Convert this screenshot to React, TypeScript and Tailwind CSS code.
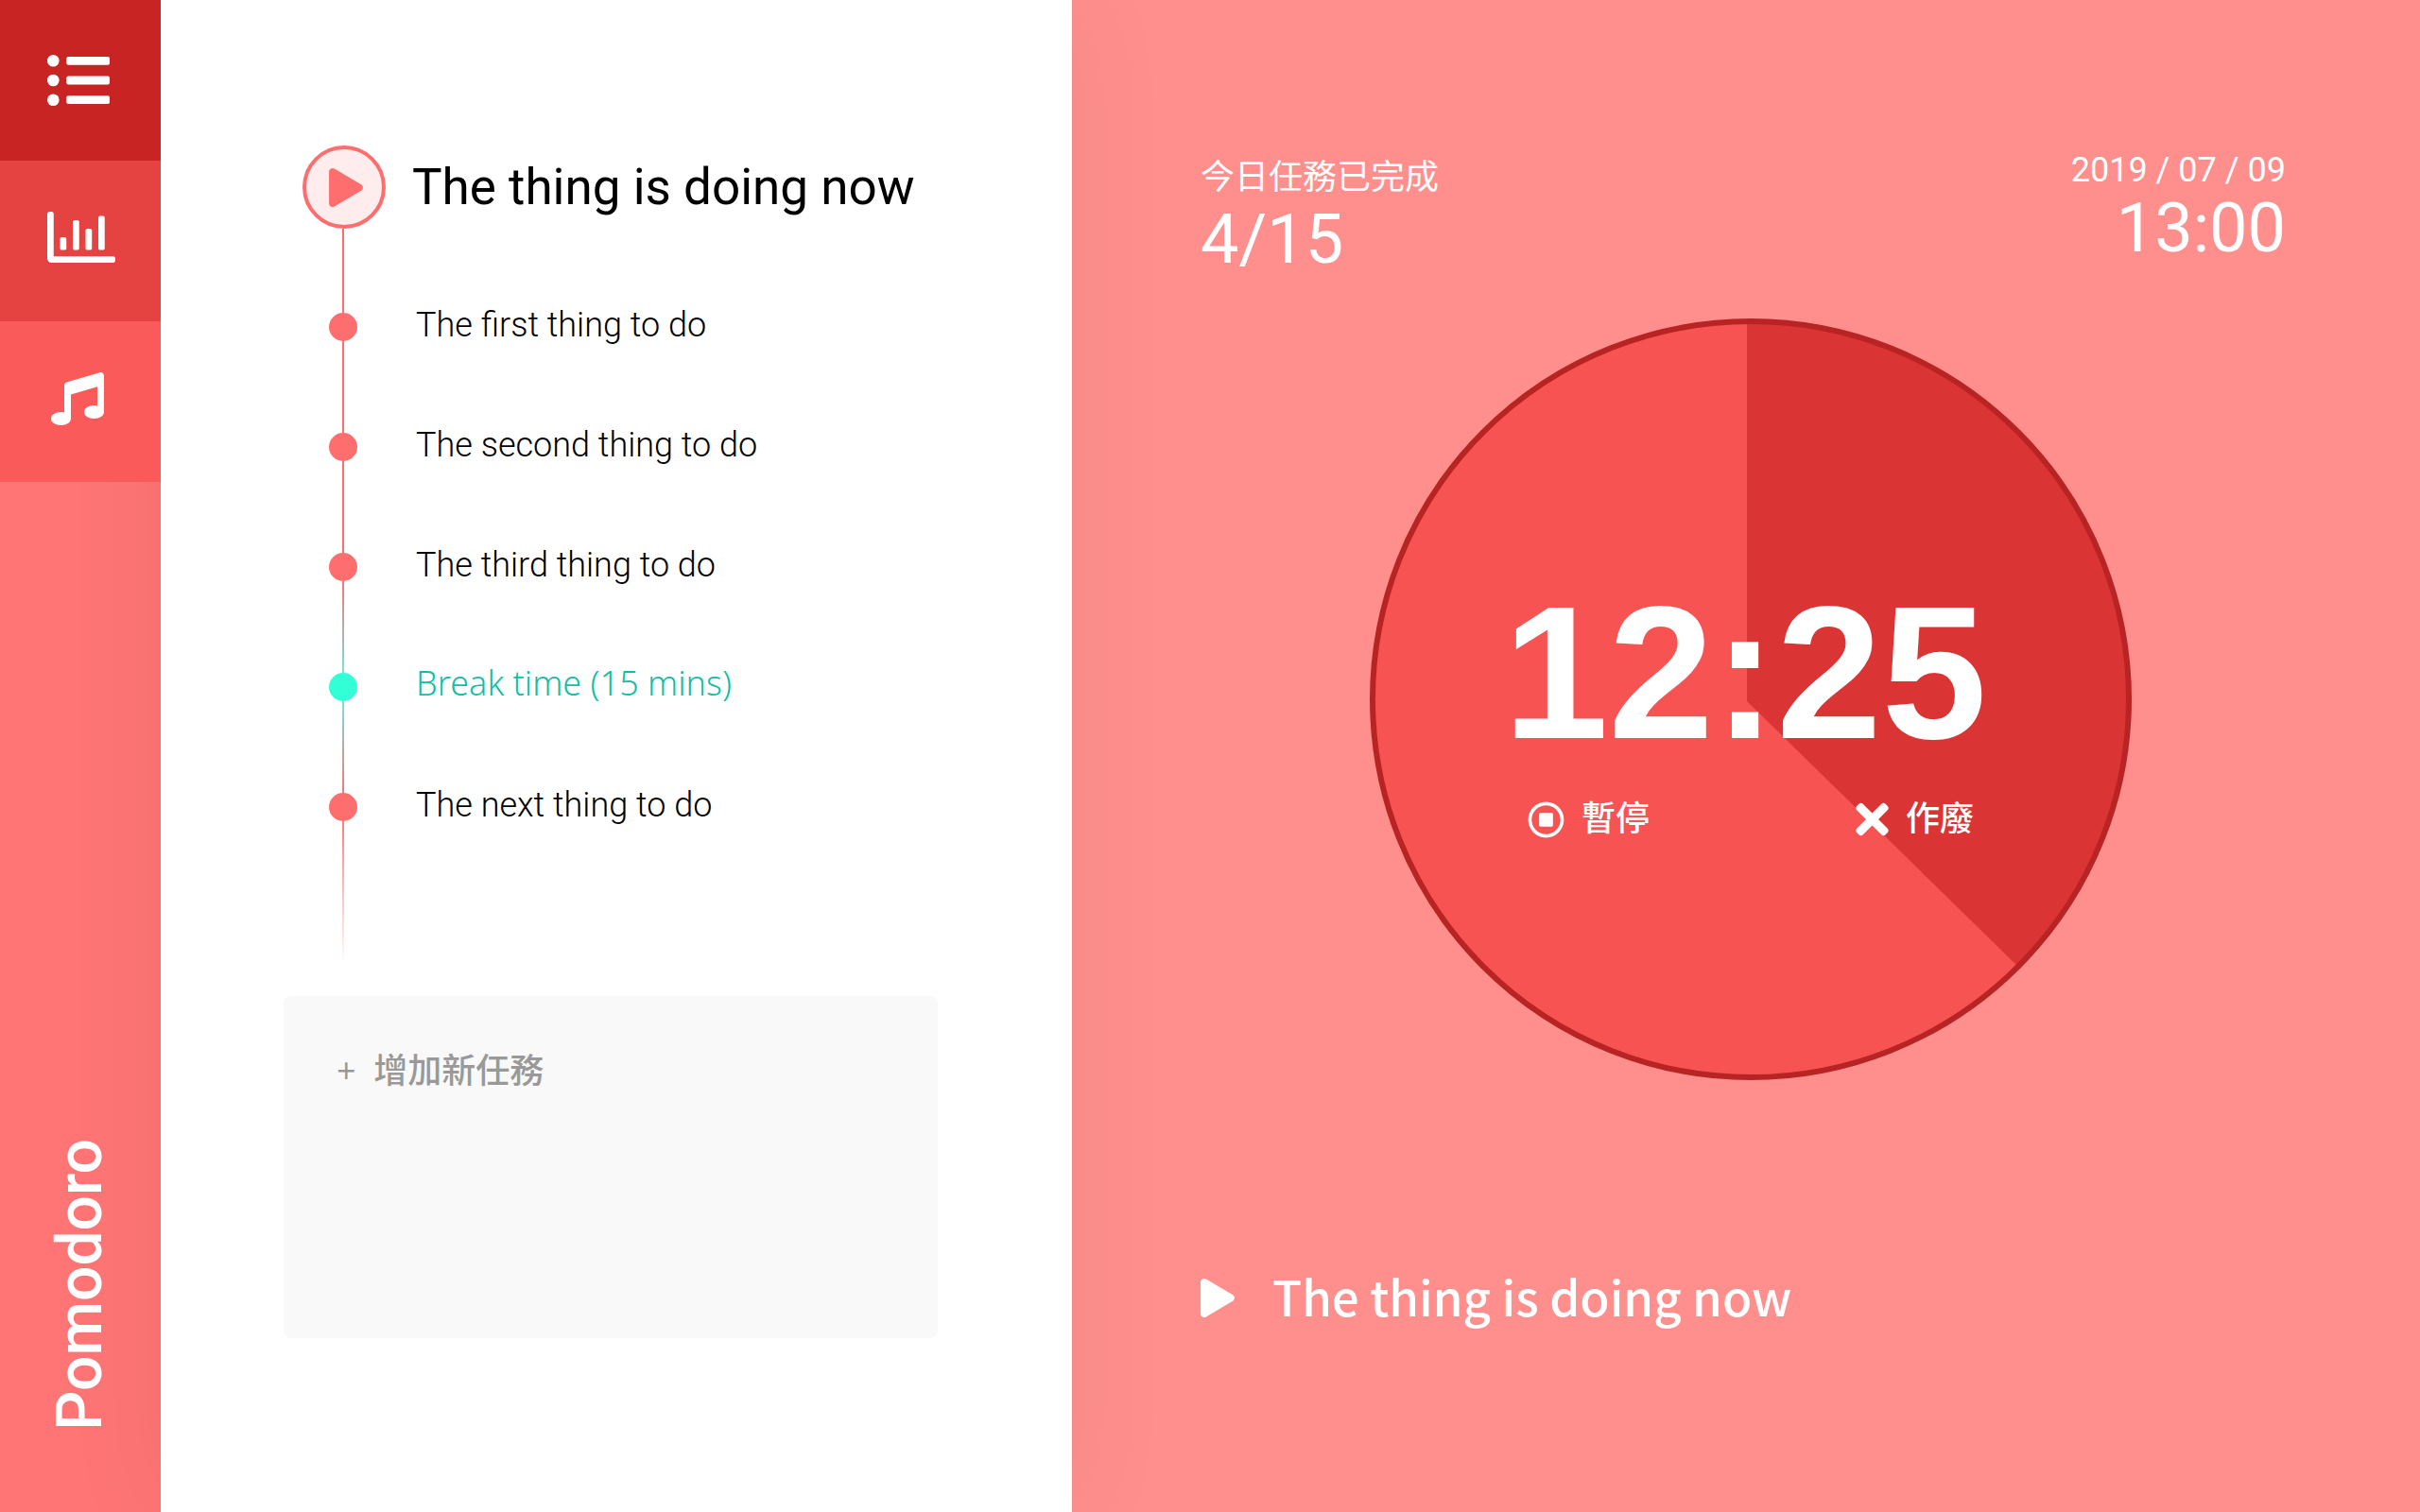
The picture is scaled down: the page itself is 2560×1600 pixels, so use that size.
import { FaMusic, FaPlay, FaRegChartBar, FaRegStopCircle, FaTimes } from "react-icons/fa";

type Task = { label: string; isBreak?: boolean };

const tasks: Task[] = [
  { label: "The first thing to do" },
  { label: "The second thing to do" },
  { label: "The third thing to do" },
  { label: "Break time (15 mins)", isBreak: true },
  { label: "The next thing to do" },
];

function ListIcon() {
  return (
    <svg viewBox="0 0 66 54" className="h-[54px] w-[66px]" fill="currentColor" aria-hidden="true">
      {[6.3, 27, 47.7].map((cy) => (
        <g key={cy}>
          <circle cx="6.3" cy={cy} r="6.3" />
          <rect x="20.3" y={cy - 4.4} width="45.7" height="8.8" rx="2" />
        </g>
      ))}
    </svg>
  );
}

function Rail() {
  return (
    <nav className="flex flex-col bg-[#ff7575] text-white">
      <button type="button" aria-label="Tasks" className="relative z-20 flex h-[170px] items-center bg-[#c92424] pl-[50px]">
        <ListIcon />
      </button>
      <button type="button" aria-label="Statistics" className="relative z-20 flex h-[170px] items-center bg-[#e54242] pb-2 pl-[50px]">
        <FaRegChartBar className="size-[72px]" />
      </button>
      <button type="button" aria-label="Music" className="relative z-20 flex h-[170px] items-center bg-[#fa5a5a] pb-1.5 pl-[54px]">
        <FaMusic className="size-[56px]" />
      </button>
      <h1 className="relative z-20 mt-auto mb-[86px] ml-[45px] rotate-180 self-start text-[66px] leading-[80px] font-medium [writing-mode:vertical-rl]">
        Pomodoro
      </h1>
    </nav>
  );
}

function TaskPanel() {
  return (
    <section className="relative z-10 flex flex-col bg-white pt-[154px] pr-[142px] pl-[130px] shadow-[0_0_110px_rgba(0,0,0,0.06)]">
      <div className="relative pb-[104px] pl-5">
        <div className="absolute top-[88px] bottom-0 left-[62px] w-[2px] bg-[linear-gradient(to_bottom,#ff6e6e_0%,#ff6e6e_47%,#66f0ec_62%,#ff6e6e_78%,rgba(255,110,110,0)_100%)]" />
        <div className="relative mb-10 flex items-center gap-7">
          <button
            type="button"
            aria-label="Play"
            className="flex size-[88px] shrink-0 items-center justify-center rounded-full border-4 border-[#ff6e6e] bg-[#ffeded] pl-1 text-[#ff6e6e]"
          >
            <FaPlay className="h-[41px] w-[36px]" />
          </button>
          <h2 className="text-[53px] leading-[88px] whitespace-nowrap text-black">The thing is doing now</h2>
        </div>
        <ol className="relative">
          {tasks.map((task) => (
            <li key={task.label} className="flex h-[127px] items-center gap-[34px]">
              <span className="flex w-[86px] justify-center">
                <span className={task.isBreak ? "size-[30px] rounded-full bg-[#33ffd6]" : "size-[30px] rounded-full bg-[#ff6e6e]"} />
              </span>
              <span
                className={
                  task.isBreak
                    ? "pb-2 font-['Noto_Sans',sans-serif] text-[36px] leading-[44px] font-light text-[#12bfa5]"
                    : "pb-1 text-[36px] leading-[44px] font-light text-black"
                }
              >
                {task.label}
              </span>
            </li>
          ))}
        </ol>
      </div>
      <textarea
        aria-label="增加新任務"
        placeholder="+  增加新任務"
        className="mt-[33px] h-[362px] w-full resize-none rounded-lg bg-[#f9f9f9] px-14 pt-[57px] font-['Open_Sans','Noto_Sans_CJK_TC',sans-serif] text-[36px] leading-[44px] font-medium text-[#555555] outline-none placeholder:text-[#999999]"
      />
    </section>
  );
}

function Dial() {
  return (
    <div className="grid aspect-square w-[806px] max-w-full">
      <svg viewBox="0 0 806 806" className="size-full [grid-area:1/1]" aria-hidden="true">
        <circle cx="403" cy="403" r="400" fill="#f75353" />
        <path d="M399 405V3A400 400 0 0 1 686 686Z" fill="#db3434" />
        <circle cx="403" cy="403" r="400" fill="none" stroke="#b82323" strokeWidth="6" />
      </svg>
      <div className="flex flex-col items-center justify-center pt-[42px] [grid-area:1/1]">
        <time className="pr-3 font-['Liberation_Sans',sans-serif] text-[200px] leading-[164px] font-bold">12:25</time>
        <div className="mt-12 flex w-[472px] justify-between text-[36px] leading-[44px] font-medium">
          <button type="button" className="flex items-center gap-[18px]">
            <FaRegStopCircle className="size-[39px]" />
            暫停
          </button>
          <button type="button" className="flex items-center gap-[18px]">
            <FaTimes className="h-[50px] w-[35px]" />
            作廢
          </button>
        </div>
      </div>
    </div>
  );
}

function TimerPanel() {
  return (
    <main className="flex flex-col bg-[#ff8f8d] pt-[158px] pr-[142px] pb-16 pl-[136px] text-white">
      <header className="relative z-20 flex items-start justify-between">
        <div className="flex flex-col gap-2 pt-2">
          <p className="text-[36px] leading-[44px]">今日任務已完成</p>
          <p className="text-[72px] leading-[72px]">4/15</p>
        </div>
        <div className="flex flex-col gap-1 text-right">
          <p className="text-[36px] leading-[44px]">2019 / 07 / 09</p>
          <p className="text-[72px] leading-[72px]">13:00</p>
        </div>
      </header>
      <div className="mt-[47px] flex justify-center pl-4">
        <Dial />
      </div>
      <div className="mt-[194px] flex items-center gap-10">
        <button type="button" aria-label="Play current task">
          <FaPlay className="h-[41px] w-[36px]" />
        </button>
        <p className="pb-1 font-['Noto_Sans_CJK_TC',sans-serif] text-[51px] leading-[68px] font-medium">The thing is doing now</p>
      </div>
    </main>
  );
}

export default function App() {
  return (
    <div className="grid min-h-screen grid-cols-[170px_964fr_1426fr] overflow-hidden font-['Roboto','Noto_Sans_CJK_TC',sans-serif]">
      <Rail />
      <TaskPanel />
      <TimerPanel />
    </div>
  );
}
